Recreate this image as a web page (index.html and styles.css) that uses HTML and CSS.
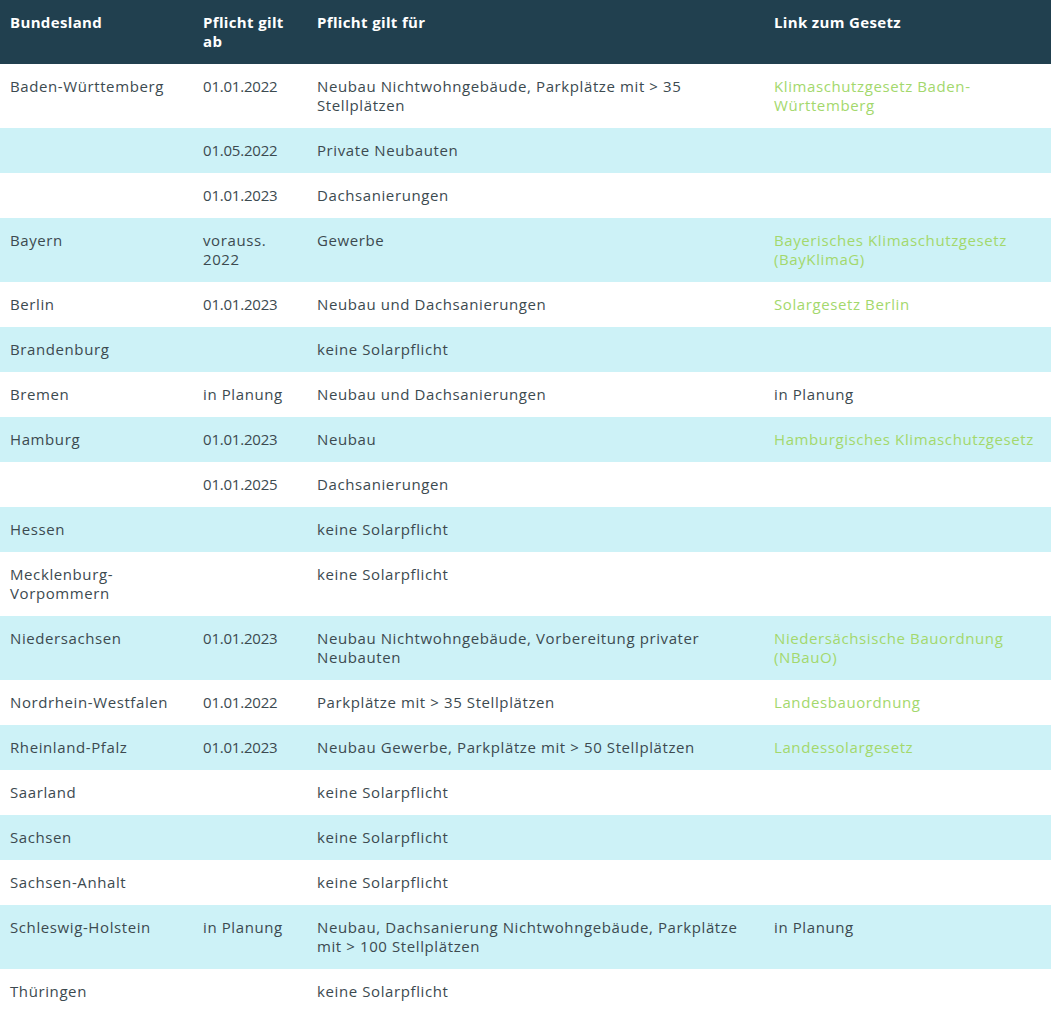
FILE: index.html
```html
<!DOCTYPE html>
<html lang="de">
<head>
<meta charset="utf-8">
<title>Solarpflicht Bundesländer</title>
<link rel="stylesheet" href="styles.css">
</head>
<body>
<table class="solar-table">
  <colgroup>
    <col class="col-land">
    <col class="col-date">
    <col class="col-scope">
    <col class="col-link">
  </colgroup>
  <thead>
    <tr>
      <th>Bundesland</th>
      <th>Pflicht gilt<br>ab</th>
      <th>Pflicht gilt für</th>
      <th>Link zum Gesetz</th>
    </tr>
  </thead>
  <tbody>
    <tr><td>Baden-Württemberg</td><td class="date">01.01.2022</td><td>Neubau Nichtwohngebäude, Parkplätze mit &gt; 35<br>Stellplätzen</td><td><a href="#">Klimaschutzgesetz Baden-<br>Württemberg</a></td></tr>
    <tr><td></td><td class="date">01.05.2022</td><td>Private Neubauten</td><td></td></tr>
    <tr><td></td><td class="date">01.01.2023</td><td>Dachsanierungen</td><td></td></tr>
    <tr><td>Bayern</td><td>vorauss.<br>2022</td><td>Gewerbe</td><td><a href="#">Bayerisches Klimaschutzgesetz<br>(BayKlimaG)</a></td></tr>
    <tr><td>Berlin</td><td class="date">01.01.2023</td><td>Neubau und Dachsanierungen</td><td><a href="#">Solargesetz Berlin</a></td></tr>
    <tr><td>Brandenburg</td><td></td><td>keine Solarpflicht</td><td></td></tr>
    <tr><td>Bremen</td><td>in Planung</td><td>Neubau und Dachsanierungen</td><td>in Planung</td></tr>
    <tr><td>Hamburg</td><td class="date">01.01.2023</td><td>Neubau</td><td><a href="#">Hamburgisches Klimaschutzgesetz</a></td></tr>
    <tr><td></td><td class="date">01.01.2025</td><td>Dachsanierungen</td><td></td></tr>
    <tr><td>Hessen</td><td></td><td>keine Solarpflicht</td><td></td></tr>
    <tr><td>Mecklenburg-<br>Vorpommern</td><td></td><td>keine Solarpflicht</td><td></td></tr>
    <tr><td>Niedersachsen</td><td class="date">01.01.2023</td><td>Neubau Nichtwohngebäude, Vorbereitung privater<br>Neubauten</td><td><a href="#">Niedersächsische Bauordnung<br>(NBauO)</a></td></tr>
    <tr><td>Nordrhein-Westfalen</td><td class="date">01.01.2022</td><td>Parkplätze mit &gt; 35 Stellplätzen</td><td><a href="#">Landesbauordnung</a></td></tr>
    <tr><td>Rheinland-Pfalz</td><td class="date">01.01.2023</td><td>Neubau Gewerbe, Parkplätze mit &gt; 50 Stellplätzen</td><td><a href="#">Landessolargesetz</a></td></tr>
    <tr><td>Saarland</td><td></td><td>keine Solarpflicht</td><td></td></tr>
    <tr><td>Sachsen</td><td></td><td>keine Solarpflicht</td><td></td></tr>
    <tr><td>Sachsen-Anhalt</td><td></td><td>keine Solarpflicht</td><td></td></tr>
    <tr><td>Schleswig-Holstein</td><td>in Planung</td><td>Neubau, Dachsanierung Nichtwohngebäude, Parkplätze<br>mit &gt; 100 Stellplätzen</td><td>in Planung</td></tr>
    <tr><td>Thüringen</td><td></td><td>keine Solarpflicht</td><td></td></tr>
  </tbody>
</table>
</body>
</html>
```
FILE: styles.css
```css
html, body {
  margin: 0;
  padding: 0;
  background: #ffffff;
}

body {
  font-family: "Open Sans", "Liberation Sans", sans-serif;
  font-size: 15px;
  color: #3c4a50;
}

.solar-table {
  width: 1051px;
  border-collapse: collapse;
  table-layout: fixed;
}

.col-land { width: 193px; }
.col-date { width: 114px; }
.col-scope { width: 457px; }
.col-link { width: 287px; }

.solar-table th,
.solar-table td {
  padding: 13px 10px;
  line-height: 19px;
  vertical-align: top;
  text-align: left;
  white-space: nowrap;
  letter-spacing: 0.6px;
}

.solar-table th {
  background: #21404f;
  color: #ffffff;
  font-weight: 700;
  letter-spacing: 0.35px;
}

.solar-table td.date {
  letter-spacing: -0.2px;
}

.solar-table tbody tr:nth-child(even) td {
  background: #cdf2f7;
}

.solar-table a {
  color: #a3d86c;
  text-decoration: none;
}
```
